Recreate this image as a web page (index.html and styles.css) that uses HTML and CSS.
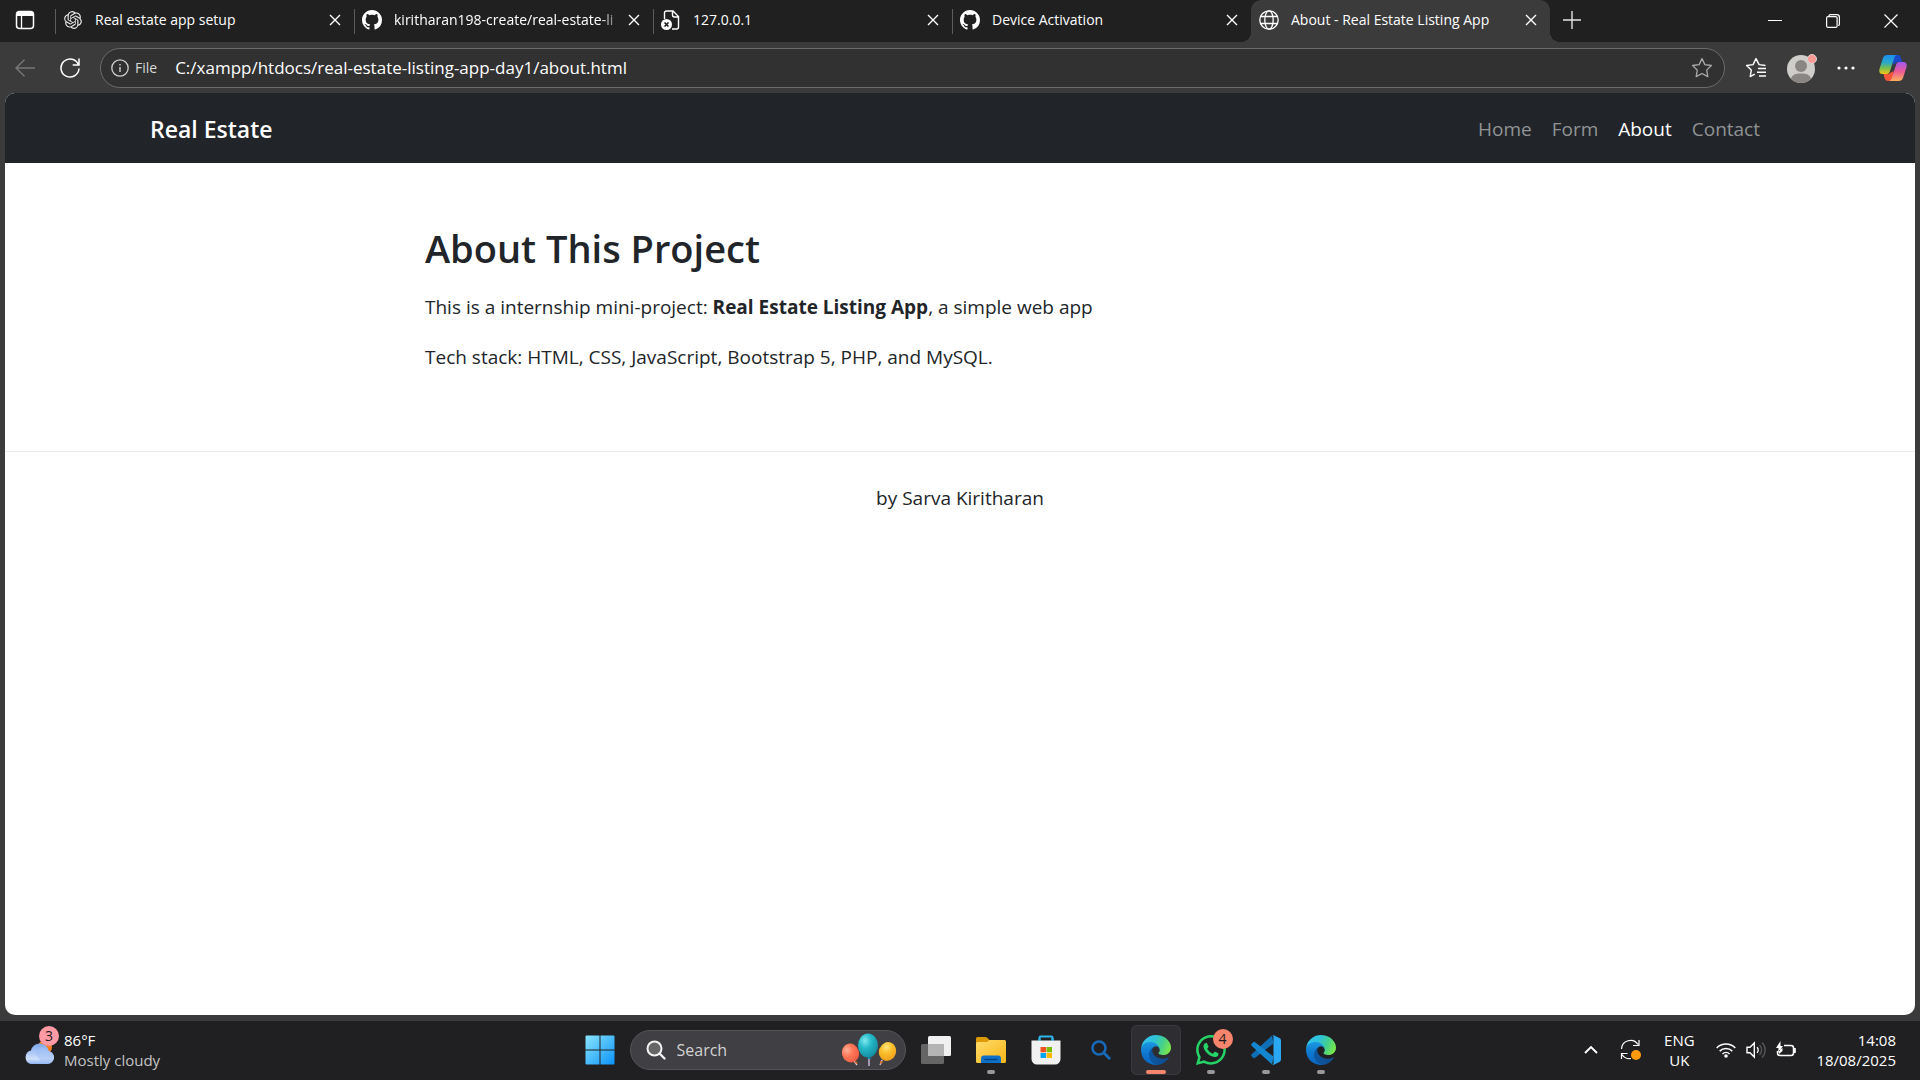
FILE: index.html
```html
<!DOCTYPE html>
<html lang="en">
<head>
<meta charset="utf-8">
<meta name="viewport" content="width=device-width, initial-scale=1">
<title>About - Real Estate Listing App</title>
<link rel="stylesheet" href="styles.css">
</head>
<body>
<svg class="defs" aria-hidden="true">
  <defs>
    <linearGradient id="edgeA" x1="0" y1="0" x2="1" y2="0"><stop offset="0" stop-color="#0c59a4"/><stop offset="1" stop-color="#114a8b"/></linearGradient>
    <linearGradient id="edgeB" x1="0" y1="0" x2="0" y2="1"><stop offset="0" stop-color="#1b9de2"/><stop offset=".5" stop-color="#0f78d0"/><stop offset="1" stop-color="#0a64c0"/></linearGradient>
    <linearGradient id="edgeC" x1="0" y1=".3" x2="1" y2=".6"><stop offset="0" stop-color="#35c1f1"/><stop offset=".4" stop-color="#2fc3d6"/><stop offset=".7" stop-color="#45d08a"/><stop offset="1" stop-color="#7be84a"/></linearGradient>
    <linearGradient id="win" x1="0" y1="0" x2="1" y2="1"><stop offset="0" stop-color="#8be4ff"/><stop offset="1" stop-color="#0a93f8"/></linearGradient>
    <linearGradient id="cloud" x1="0" y1="0" x2="0" y2="1"><stop offset="0" stop-color="#7ba6ee"/><stop offset=".75" stop-color="#cfe0fb"/><stop offset="1" stop-color="#8fb4f2"/></linearGradient>
    <linearGradient id="folder" x1="0" y1="0" x2="1" y2="1"><stop offset="0" stop-color="#ffdc6b"/><stop offset="1" stop-color="#f7b517"/></linearGradient>
    <linearGradient id="copA" x1="0" y1="0" x2="0" y2="1"><stop offset="0" stop-color="#1b8ff0"/><stop offset=".4" stop-color="#2aa8c8"/><stop offset=".7" stop-color="#7cc04a"/><stop offset="1" stop-color="#f5c518"/></linearGradient>
    <linearGradient id="copB" x1="0" y1="0" x2="0" y2="1"><stop offset="0" stop-color="#a257f0"/><stop offset=".5" stop-color="#ee5a96"/><stop offset="1" stop-color="#fbb05a"/></linearGradient>
    <radialGradient id="balR" cx=".35" cy=".3" r=".8"><stop offset="0" stop-color="#ffb09a"/><stop offset=".4" stop-color="#ff7a5c"/><stop offset="1" stop-color="#f0563c"/></radialGradient>
    <radialGradient id="balT" cx=".35" cy=".3" r=".8"><stop offset="0" stop-color="#7eeaf0"/><stop offset=".4" stop-color="#25b9c8"/><stop offset="1" stop-color="#11869a"/></radialGradient>
    <radialGradient id="balY" cx=".35" cy=".3" r=".8"><stop offset="0" stop-color="#ffe680"/><stop offset=".4" stop-color="#fbc02d"/><stop offset="1" stop-color="#ee9a1a"/></radialGradient>
    <symbol id="i-close" viewBox="0 0 12 12"><path d="M1 1l10 10M11 1L1 11" fill="none" stroke="currentColor" stroke-width="1.4"/></symbol>
    <symbol id="i-github" viewBox="0 0 16 16"><path fill="currentColor" d="M8 0C3.58 0 0 3.58 0 8c0 3.54 2.29 6.53 5.47 7.59.4.07.55-.17.55-.38 0-.19-.01-.82-.01-1.49-2.01.37-2.53-.49-2.69-.94-.09-.23-.48-.94-.82-1.13-.28-.15-.68-.52-.01-.53.63-.01 1.08.58 1.23.82.72 1.21 1.87.87 2.33.66.07-.52.28-.87.51-1.07-1.78-.2-3.64-.89-3.64-3.95 0-.87.31-1.59.82-2.15-.08-.2-.36-1.02.08-2.12 0 0 .67-.21 2.2.82.64-.18 1.32-.27 2-.27s1.36.09 2 .27c1.53-1.04 2.2-.82 2.2-.82.44 1.1.16 1.92.08 2.12.51.56.82 1.27.82 2.15 0 3.07-1.87 3.75-3.65 3.95.29.25.54.73.54 1.48 0 1.07-.01 1.93-.01 2.2 0 .21.15.46.55.38A8.01 8.01 0 0 0 16 8c0-4.42-3.58-8-8-8z"/></symbol>
    <symbol id="i-edge" viewBox="0 0 256 256">
      <path fill="url(#edgeA)" d="M231 190.5c-3.4 1.8-6.9 3.4-10.5 4.7a101.5 101.5 0 01-35.9 6.5c-47.3 0-88.5-32.5-88.5-74.3a31.5 31.5 0 0116.4-27.3c-42.8 1.8-53.8 46.4-53.8 72.5 0 73.9 68.1 81.4 82.8 81.4 7.9 0 19.8-2.3 27-4.6l1.3-.4a128.3 128.3 0 0066.6-52.8 4 4 0 00-5.4-5.7z"/>
      <path fill="url(#edgeB)" d="M105.7 241.4A79.2 79.2 0 0183 220.1a80.7 80.7 0 0129.5-120c3.2-1.5 8.5-4.1 15.6-4a32.4 32.4 0 0125.7 13 31.9 31.9 0 016.3 18.7c0-.2 24.5-79.6-80-79.6-43.9 0-80 41.7-80 78.2a130.2 130.2 0 0012.1 56 128 128 0 00156.4 67 75.5 75.5 0 01-62.8-8z"/>
      <path fill="url(#edgeC)" d="M152.3 148.9c-.9 1-3.4 2.5-3.4 5.6 0 2.6 1.7 5.1 4.8 7.2 14.3 10 41.4 8.6 41.5 8.6a59.6 59.6 0 0030.3-8.3 61.4 61.4 0 0030.4-52.9c.3-22.4-8-37.3-11.3-43.9C223.5 23.9 177.7 0 128 0A128 128 0 000 126.2c.5-36.5 36.8-66 80-66 3.5 0 23.5.3 42 10.1a72.6 72.6 0 0130.9 29.3c6.1 10.6 7.2 24.1 7.2 29.5s-2.7 13.3-7.8 19.9z"/>
    </symbol>
  </defs>
</svg>

<div class="browser">
  <div class="tab-strip">
    <button class="tab-actions" aria-label="Tab actions menu"><svg width="20" height="20" viewBox="0 0 20 20"><rect x="1.500" y="1.500" width="17" height="17" rx="3" fill="none" stroke="#fff" stroke-width="1.500"/><path d="M2 4a3 3 0 0 1 3-3h10a3 3 0 0 1 3 3v2H2z" fill="#fff"/><path d="M6.500 6v12" stroke="#fff" stroke-width="1.300"/></svg></button>
    <div class="tabs">
      <div class="tab">
        <svg class="favicon" viewBox="-1.500 -1.500 27 27"><path fill="#e8e8e8" d="M22.2819 9.8211a5.9847 5.9847 0 0 0-.5157-4.9108 6.0462 6.0462 0 0 0-6.5098-2.9A6.0651 6.0651 0 0 0 4.9807 4.1818a5.9847 5.9847 0 0 0-3.9977 2.9 6.0462 6.0462 0 0 0 .7427 7.0966 5.98 5.98 0 0 0 .511 4.9107 6.051 6.051 0 0 0 6.5146 2.9001A5.9847 5.9847 0 0 0 13.2599 24a6.0557 6.0557 0 0 0 5.7718-4.2058 5.9894 5.9894 0 0 0 3.9977-2.9001 6.0557 6.0557 0 0 0-.7475-7.0729zm-9.022 12.6081a4.4755 4.4755 0 0 1-2.8764-1.0408l.1419-.0804 4.7783-2.7582a.7948.7948 0 0 0 .3927-.6813v-6.7369l2.02 1.1686a.071.071 0 0 1 .038.052v5.5826a4.504 4.504 0 0 1-4.4945 4.4944zm-9.6607-4.1254a4.4708 4.4708 0 0 1-.5346-3.0137l.142.0852 4.783 2.7582a.7712.7712 0 0 0 .7806 0l5.8428-3.3685v2.3324a.0804.0804 0 0 1-.0332.0615L9.74 19.9502a4.4992 4.4992 0 0 1-6.1408-1.6464zM2.3408 7.8956a4.485 4.485 0 0 1 2.3655-1.9728V11.6a.7664.7664 0 0 0 .3879.6765l5.8144 3.3543-2.0201 1.1685a.0757.0757 0 0 1-.071 0l-4.8303-2.7865A4.504 4.504 0 0 1 2.3408 7.872zm16.5963 3.8558L13.1038 8.364 15.1192 7.2a.0757.0757 0 0 1 .071 0l4.8303 2.7913a4.4944 4.4944 0 0 1-.6765 8.1042v-5.6772a.79.79 0 0 0-.407-.667zm2.0107-3.0231l-.142-.0852-4.7735-2.7818a.7759.7759 0 0 0-.7854 0L9.409 9.2297V6.8974a.0662.0662 0 0 1 .0284-.0615l4.8303-2.7866a4.4992 4.4992 0 0 1 6.6802 4.66zM8.3065 12.863l-2.02-1.1638a.0804.0804 0 0 1-.038-.0567V6.0742a4.4992 4.4992 0 0 1 7.3757-3.4537l-.142.0805L8.704 5.459a.7948.7948 0 0 0-.3927.6813zm1.0976-2.3654l2.602-1.4998 2.6069 1.4998v2.9994l-2.5974 1.4997-2.6067-1.4997Z"/></svg>
        <span class="tab-title">Real estate app setup</span>
        <button class="tab-close" aria-label="Close tab"><svg width="12" height="12"><use href="#i-close"/></svg></button>
      </div>
      <div class="tab">
        <svg class="favicon"><use href="#i-github"/></svg>
        <span class="tab-title tab-title-fade">kiritharan198-create/real-estate-li</span>
        <button class="tab-close" aria-label="Close tab"><svg width="12" height="12"><use href="#i-close"/></svg></button>
      </div>
      <div class="tab">
        <svg class="favicon" viewBox="0 0 20 20"><path d="M3.500 9V3a2 2 0 0 1 2-2H12l5.500 5.500V17a2 2 0 0 1-2 2H11M11.500 1v4a2 2 0 0 0 2 2h4" fill="none" stroke="#fff" stroke-width="1.400"/><circle cx="5.500" cy="14.500" r="5.500" fill="#fff"/><path d="M3.500 12.500l4 4m0-4l-4 4" stroke="#202020" stroke-width="1.600"/></svg>
        <span class="tab-title">127.0.0.1</span>
        <button class="tab-close" aria-label="Close tab"><svg width="12" height="12"><use href="#i-close"/></svg></button>
      </div>
      <div class="tab">
        <svg class="favicon"><use href="#i-github"/></svg>
        <span class="tab-title">Device Activation</span>
        <button class="tab-close" aria-label="Close tab"><svg width="12" height="12"><use href="#i-close"/></svg></button>
      </div>
      <div class="tab tab-active">
        <svg class="favicon" viewBox="0 0 20 20"><g fill="none" stroke="#fff" stroke-width="1.300"><circle cx="10" cy="10" r="9.200"/><ellipse cx="10" cy="10" rx="4.200" ry="9.200"/><path d="M1.600 6.500h16.800M1.600 13.500h16.800"/></g></svg>
        <span class="tab-title">About - Real Estate Listing App</span>
        <button class="tab-close" aria-label="Close tab"><svg width="12" height="12"><use href="#i-close"/></svg></button>
      </div>
    </div>
    <button class="new-tab" aria-label="New tab"><svg width="18" height="18" viewBox="0 0 18 18"><path d="M9 0v18M0 9h18" stroke="#e4e4e4" stroke-width="1.400"/></svg></button>
    <div class="window-controls">
      <button aria-label="Minimise"><svg width="14" height="14" viewBox="0 0 14 14"><path d="M0 6.500h14" stroke="#fff"/></svg></button>
      <button aria-label="Restore"><svg width="14" height="14" viewBox="0 0 14 14"><g fill="none" stroke="#fff" stroke-width="1.200"><rect x=".6" y="2.600" width="10.500" height="10.800" rx="1.500"/><path d="M3 2.500V2A1.400 1.400 0 0 1 4.400.6h6.400a2.600 2.600 0 0 1 2.600 2.600v7a1.300 1.300 0 0 1-1.300 1.300"/></g></svg></button>
      <button aria-label="Close window"><svg width="14" height="14" viewBox="0 0 14 14"><path d="M.5.5l13 13m0-13l-13 13" stroke="#fff" stroke-width="1.200"/></svg></button>
    </div>
  </div>

  <div class="toolbar">
    <button class="tool" aria-label="Back" disabled><svg width="20" height="18" viewBox="0 0 20 18"><path d="M20 9H1M9.500 .7L1 9l8.500 8.300" fill="none" stroke="#777" stroke-width="1.400"/></svg></button>
    <button class="tool" aria-label="Refresh"><svg width="22" height="22" viewBox="0 0 22 22"><path d="M19.500 8A9 9 0 1 0 20 11.500M20 1.500V8h-6.300" fill="none" stroke="#fff" stroke-width="1.500"/></svg></button>
    <div class="address">
      <button class="site-info"><svg width="18" height="18" viewBox="0 0 18 18"><circle cx="9" cy="9" r="8.200" fill="none" stroke="#d0d0d0" stroke-width="1.300"/><path d="M9 8v5M9 5v1.500" stroke="#d0d0d0" stroke-width="1.400"/></svg>File</button>
      <input class="url" type="text" aria-label="Address" value="C:/xampp/htdocs/real-estate-listing-app-day1/about.html">
      <button class="favourite" aria-label="Add to favourites"><svg width="22" height="22" viewBox="0 0 22 22"><path d="M11 1.600l2.900 6 6.500.9-4.700 4.600 1.100 6.500L11 16.500l-5.800 3.100 1.100-6.500L1.600 8.500l6.500-.9z" fill="none" stroke="#aaa" stroke-width="1.300" stroke-linejoin="round"/></svg></button>
    </div>
    <div class="tools-right">
      <button class="tool" aria-label="Favourites"><svg width="22" height="22" viewBox="0 0 22 22"><path d="M20.500 8.500l-6.400-.9L11 1.600l-2.900 6-6.500.9 4.700 4.600-1.100 6.500 4.500-2.400M13 11.500h8M12 15.300h9M14 19h7" fill="none" stroke="#fff" stroke-width="1.400" stroke-linejoin="round"/></svg></button>
      <button class="tool" aria-label="Profile"><svg width="32" height="32" viewBox="0 0 32 32"><circle cx="16" cy="17" r="14" fill="#cfcdca"/><circle cx="16" cy="14" r="6" fill="#8a8683"/><path d="M6 26.800C7 22.500 11 21.500 16 21.500s9 1 10 5.300A14 14 0 0 1 6 26.800z" fill="#8a8683"/><circle cx="27" cy="7" r="4.500" fill="#ff9a94" stroke="#d6d3d0"/></svg></button>
      <button class="tool" aria-label="Settings and more"><svg width="18" height="4" viewBox="0 0 18 4" fill="#fff"><circle cx="2" cy="2" r="1.600"/><circle cx="9" cy="2" r="1.600"/><circle cx="16" cy="2" r="1.600"/></svg></button>
      <button class="tool tool-copilot" aria-label="Copilot"><svg width="28" height="28" viewBox="0 0 28 28"><path d="M14 1h5c2 0 2.500 1.500 3 3l1 4h-5l-4 3z" fill="#1a49c8"/><path d="M14 27H9c-2 0-3-1.500-3.500-3L4.500 20h5l5-3z" fill="#f4553a"/><path d="M8.500 1H18c-1.500 0-2.300 1.500-2.800 3L11 17c-.6 2-1.500 3-3.500 3H3.500C.5 20-.3 17.500.6 14.500L4 4c.8-2 2-3 4.500-3z" fill="url(#copA)"/><path d="M19.500 27H10c1.500 0 2.300-1.500 2.800-3L17 11c.6-2 1.500-3 3.500-3h4c3 0 3.800 2.500 2.900 5.500L24 24c-.8 2-2 3-4.500 3z" fill="url(#copB)"/></svg></button>
    </div>
  </div>

  <div class="page">
    <header class="navbar">
      <div class="container navbar-inner">
        <a class="brand" href="#">Real Estate</a>
        <nav class="nav">
          <a href="#">Home</a>
          <a href="#">Form</a>
          <a class="nav-current" href="#" aria-current="page">About</a>
          <a href="#">Contact</a>
        </nav>
      </div>
    </header>
    <main class="about">
      <h2>About This Project</h2>
      <p>This is a internship mini-project: <strong>Real Estate Listing App</strong>, a simple web app</p>
      <p>Tech stack: HTML, CSS, JavaScript, Bootstrap 5, PHP, and MySQL.</p>
    </main>
    <footer class="footer">by Sarva Kiritharan</footer>
  </div>
</div>

<div class="taskbar">
  <div class="weather">
    <svg width="32" height="32" viewBox="0 0 32 32"><circle cx="22" cy="13" r="7" fill="#f57c1f"/><path d="M7.500 30h17a6.500 6.500 0 0 0 1.200-12.900A9 9 0 0 0 8 16.500 7 7 0 0 0 7.500 30z" fill="url(#cloud)"/><path d="M12 19a8 8 0 0 1 14-1.800A6.500 6.500 0 0 1 24.500 30h-5" fill="#9fc0f6" opacity=".5"/></svg>
    <span class="badge badge-weather">3</span>
    <div class="weather-text"><span>86°F</span><span class="muted">Mostly cloudy</span></div>
  </div>

  <div class="dock">
    <button class="app" aria-label="Start"><svg width="30" height="30" viewBox="0 0 30 30"><path fill="url(#win)" d="M1.500 .5h13v14h-14v-13a1 1 0 0 1 1-1zm14 0h13a1 1 0 0 1 1 1v13h-14zm-15 15h14v14h-13a1 1 0 0 1-1-1zm15 0h14v13a1 1 0 0 1-1 1h-13z"/></svg></button>
    <label class="search">
      <svg width="20" height="20" viewBox="0 0 20 20"><circle cx="8.500" cy="8.500" r="7" fill="#666" stroke="#f2f2f2" stroke-width="2"/><path d="M13.500 13.500l5 5" stroke="#f2f2f2" stroke-width="2.400" stroke-linecap="round"/></svg>
      <input type="text" placeholder="Search" aria-label="Search">
      <svg width="56" height="34" viewBox="0 0 56 34"><path d="M13 28l3 4M28 24v9M41 27l-2 5" stroke="#d8c8f0" stroke-width="1.300"/><path d="M13 29.500l3-1 .6 3zM39 28l3.500.5-3 3z" fill="#d8702a"/><path d="M26 26l2-3 2.500 3z" fill="#1a7fa8"/><ellipse cx="9.500" cy="20" rx="8.500" ry="9.500" fill="url(#balR)" transform="rotate(-15 9.500 20)"/><ellipse cx="27" cy="12.500" rx="10" ry="12" fill="url(#balT)"/><ellipse cx="46.500" cy="18.500" rx="8.500" ry="9.500" fill="url(#balY)" transform="rotate(20 46.500 18.500)"/></svg>
    </label>
    <button class="app" aria-label="Task view"><svg width="32" height="30" viewBox="0 0 32 30"><rect x="1" y="9" width="23" height="20" rx="1.500" fill="#656565"/><rect x="8" y="1" width="23" height="20" rx="1.500" fill="#f0f0f0"/><path d="M8 9h16v12H9.500A1.500 1.500 0 0 1 8 19.500z" fill="#b4b4b4"/></svg></button>
    <button class="app app-running" aria-label="File Explorer"><svg width="30" height="28" viewBox="0 0 30 28"><path d="M0 2.500A1.500 1.500 0 0 1 1.500 1h7.700c1 0 1.700.4 2.300 1L13.500 4H28v8H0z" fill="#dd9a08"/><path d="M0 7.500A1.500 1.500 0 0 1 1.500 6h9.300c1 0 1.700-2 3-2h14.700A1.500 1.500 0 0 1 30 5.500v20a1.500 1.500 0 0 1-1.500 1.500h-27A1.500 1.500 0 0 1 0 25.500z" fill="url(#folder)"/><path d="M5 27v-4.500a3 3 0 0 1 3-3h14a3 3 0 0 1 3 3V27z" fill="#0f70c8"/><path d="M8.500 23.500h13" stroke="#0a3f80" stroke-width="1.300"/></svg></button>
    <button class="app" aria-label="Store"><svg width="30" height="30" viewBox="0 0 30 30"><path d="M8.500 8V2.500a1 1 0 0 1 1-1h11a1 1 0 0 1 1 1V8" fill="none" stroke="#2cb6ea" stroke-width="2"/><path d="M.5 5.500h29V24a5.500 5.500 0 0 1-5.500 5.500H6A5.500 5.500 0 0 1 .5 24z" fill="#f1f1f1"/><path d="M8.500 5.500V3M21.500 5.500V3" stroke="#2cb6ea" stroke-width="2"/><path d="M9.500 12H15v5.300H9.500z" fill="#f25022"/><path d="M15.500 12H21v5.300h-5.500z" fill="#7fba00"/><path d="M9.500 18H15v5H9.500z" fill="#00a4ef"/><path d="M15.500 18H21v5h-5.500z" fill="#ffb900"/></svg></button>
    <button class="app" aria-label="Windows Search"><svg width="20" height="20" viewBox="0 0 20 20"><circle cx="8" cy="8" r="6.500" fill="none" stroke="#1769b8" stroke-width="2.600"/><path d="M12.800 12.800l5.400 5.400" stroke="#1769b8" stroke-width="3" stroke-linecap="round"/></svg></button>
    <button class="app app-running app-active" aria-label="Microsoft Edge"><svg width="30" height="30"><use href="#i-edge"/></svg></button>
    <button class="app app-running" aria-label="WhatsApp"><svg width="30" height="30" viewBox="0 0 16 16"><path fill="#25d366" d="M13.601 2.326A7.850 7.850 0 0 0 7.994 0C3.627 0 .068 3.558.064 7.926c0 1.399.366 2.760 1.057 3.965L0 16l4.204-1.102a7.900 7.900 0 0 0 3.790.965h.004c4.368 0 7.926-3.558 7.930-7.930A7.900 7.900 0 0 0 13.600 2.326zM7.994 14.521a6.600 6.600 0 0 1-3.356-.920l-.240-.144-2.494.654.666-2.433-.156-.251a6.560 6.560 0 0 1-1.007-3.505c0-3.626 2.957-6.584 6.591-6.584a6.560 6.560 0 0 1 4.660 1.931 6.560 6.560 0 0 1 1.928 4.660c-.004 3.639-2.961 6.592-6.592 6.592m3.615-4.934c-.197-.099-1.170-.578-1.353-.646-.182-.065-.315-.099-.445.099-.133.197-.513.646-.627.775-.114.133-.232.148-.430.050-.197-.100-.836-.308-1.592-.985-.590-.525-.985-1.175-1.103-1.372-.114-.198-.011-.304.088-.403.087-.088.197-.232.296-.346.100-.114.133-.198.198-.330.065-.134.034-.248-.015-.347-.050-.099-.445-1.076-.612-1.470-.160-.389-.323-.335-.445-.340-.114-.007-.247-.007-.380-.007a.730.730 0 0 0-.529.247c-.182.198-.691.677-.691 1.654s.710 1.916.810 2.049c.098.133 1.394 2.132 3.383 2.992.470.205.840.326 1.129.418.475.152.904.129 1.246.080.380-.058 1.171-.480 1.338-.943.164-.464.164-.860.114-.943-.049-.084-.182-.133-.380-.232"/></svg><span class="badge badge-app">4</span></button>
    <button class="app app-running" aria-label="Visual Studio Code"><svg width="30" height="30" viewBox="0 0 100 100"><path d="M70 2L75 28 14 76q-4 3-7 0L2 71q-3-4 0-7z" fill="#0f6fb5"/><path d="M70 98L75 72 14 24q-4-3-7 0L2 29q-3 4 0 7z" fill="#1486cf"/><path d="M69 99q4 2 7 0l20-10q4-2 4-7V18q0-5-4-7L76 1q-4-2-7 1 6-3 6 4v88q0 7-6 5z" fill="#2aa7f3"/></svg></button>
    <button class="app app-running" aria-label="Microsoft Edge, second profile"><svg width="30" height="30"><use href="#i-edge"/></svg></button>
  </div>

  <div class="tray">
    <button class="tray-item" aria-label="Show hidden icons"><svg width="14" height="9" viewBox="0 0 14 9"><path d="M1 8l6-6 6 6" fill="none" stroke="#fff" stroke-width="1.900"/></svg></button>
    <button class="tray-item" aria-label="Updates available"><svg width="22" height="22" viewBox="0 0 22 22"><path d="M1.500 10A9 9 0 0 1 18 5.500M19 1v5.500h-6M1.500 20v-5.500h6M2 15.500a9 9 0 0 0 9 4" fill="none" stroke="#fff" stroke-width="1.200"/><circle cx="16" cy="16" r="5" fill="#ff9a0c"/></svg></button>
    <button class="language"><span>ENG</span><span>UK</span></button>
    <button class="status" aria-label="Network, volume and battery">
      <svg width="20" height="16" viewBox="0 0 20 16"><g fill="none" stroke="#fff" stroke-width="1.500"><path d="M.7 6a13 13 0 0 1 18.600 0M3.700 9.100a9 9 0 0 1 12.600 0M6.500 12a5 5 0 0 1 7 0"/></g><circle cx="10" cy="14" r="1.800" fill="#fff"/></svg>
      <svg width="20" height="18" viewBox="0 0 20 18"><g fill="none" stroke="#fff" stroke-width="1.400"><path d="M1 6.200h3L8.300 2v14L4 11.800H1zM11 6.200a4 4 0 0 1 0 5.600"/><path d="M13.500 4a7 7 0 0 1 0 10M16 1.500a10.500 10.500 0 0 1 0 15" stroke="#555"/></g></svg>
      <svg width="20" height="18" viewBox="0 0 20 18"><path d="M8 4.500h7a2.500 2.500 0 0 1 2.500 2.500v5a2.500 2.500 0 0 1-2.500 2.500H4A2.500 2.500 0 0 1 1.500 12v-2" fill="none" stroke="#fff" stroke-width="1.500"/><path d="M18.800 7v5" stroke="#fff" stroke-width="2"/><path d="M4.500 0L0 7h2.500L2 12l5-7H4.500zM3 13V9.500l3.500-2.500V10z" fill="#fff"/></svg>
    </button>
    <button class="clock"><span>14:08</span><span>18/08/2025</span></button>
  </div>
</div>
</body>
</html>
```
FILE: styles.css
```css
* {
  box-sizing: border-box;
}

body {
  display: flex;
  flex-direction: column;
  min-height: 100vh;
  margin: 0;
  background: #202022;
  color: #fff;
  font-family: "Open Sans", "Noto Sans", sans-serif;
  font-size: 14px;
}

button,
input {
  padding: 0;
  border: 0;
  background: none;
  color: inherit;
  font: inherit;
}

button {
  display: flex;
  flex: none;
  align-items: center;
  justify-content: center;
}

input {
  min-width: 0;
  outline: 0;
}

a {
  color: inherit;
  text-decoration: none;
}

svg {
  display: block;
  flex: none;
}

.defs {
  position: absolute;
  width: 0;
  height: 0;
}

/* Browser window */

.browser {
  display: flex;
  flex: 1;
  flex-direction: column;
  background: #3b3b3b;
}

.tab-strip {
  display: flex;
  height: 42px;
  background: #202020;
}

.tab-actions {
  width: 50px;
  height: 40px;
}

.tabs {
  display: flex;
  flex: 0 1 1500px;
  min-width: 0;
  padding-left: 5px;
}

.tab {
  position: relative;
  display: flex;
  flex: 1 1 0;
  align-items: center;
  gap: 12px;
  min-width: 0;
  padding: 0 13px 2px 8px;
}

.tab::before {
  content: "";
  position: absolute;
  top: 9px;
  left: 0;
  width: 1px;
  height: 25px;
  background: #5c5c5c;
}

.tab-active {
  z-index: 1;
  border-radius: 10px 10px 0 0;
  background: #3b3b3b;
}

.tab-active::before,
.tab-active::after {
  content: "";
  position: absolute;
  top: auto;
  bottom: 0;
  width: 10px;
  height: 10px;
}

.tab-active::before {
  left: -10px;
  background: radial-gradient(circle at 0 0, #202020 10px, #3b3b3b 10px);
}

.tab-active::after {
  right: -10px;
  background: radial-gradient(circle at 100% 0, #202020 10px, #3b3b3b 10px);
}

.favicon {
  width: 20px;
  height: 20px;
}

.tab-title {
  flex: 1;
  padding-bottom: 2px;
  overflow: hidden;
  white-space: nowrap;
}

.tab-title-fade {
  -webkit-mask-image: linear-gradient(to left, transparent, #000 24px);
  mask-image: linear-gradient(to left, transparent, #000 24px);
  margin-right: -8px;
}

.new-tab {
  width: 44px;
  height: 40px;
}

.window-controls {
  display: flex;
  margin-left: auto;
}

.window-controls button {
  width: 58px;
}

.toolbar {
  display: flex;
  align-items: center;
  height: 51px;
  padding: 0 2px;
}

.tool {
  width: 45px;
  height: 40px;
}

.address {
  display: flex;
  flex: 1;
  align-items: center;
  height: 40px;
  margin-left: 8px;
  padding: 0 11px 0 10px;
  border: 1px solid #6b6b6b;
  border-radius: 20px;
  background: #313131;
}

.site-info {
  gap: 6px;
  margin-right: 18px;
  color: #d8d8d8;
}

.url {
  flex: 1;
  font-size: 17px;
}

.tools-right {
  display: flex;
  margin-left: 8px;
}

.tool-copilot {
  width: 50px;
}

/* Web page */

.page {
  flex: 1;
  margin: 0 5px 5px;
  overflow: hidden;
  border-radius: 10px;
  background: #fff;
  color: #212529;
  font-size: 19px;
  line-height: 30px;
}

.navbar {
  background: #212529;
}

.container {
  max-width: 1650px;
  margin: 0 auto;
  padding: 0 15px;
}

.navbar-inner {
  display: flex;
  align-items: center;
  justify-content: space-between;
  min-height: 70px;
  padding-top: 1px;
}

.brand {
  color: #fff;
  font-size: 23px;
  font-weight: 600;
}

.nav {
  display: flex;
  color: #909294;
}

.nav a {
  padding: 10px;
}

.nav .nav-current {
  color: #fff;
}

.about {
  max-width: 1100px;
  margin: 0 auto;
  padding: 61px 15px 59px;
}

.about h2 {
  margin: 0 0 20px;
  font-size: 38px;
  font-weight: 600;
  line-height: 48px;
}

.about p {
  margin: 0 0 20px;
}

.footer {
  padding: 31px 15px 29px;
  border-top: 1px solid #e9ebed;
  text-align: center;
}

/* Taskbar */

.taskbar {
  display: grid;
  grid-template-columns: 1fr auto 1fr;
  align-items: center;
  height: 60px;
  padding-bottom: 2px;
  border-top: 1px solid #3a3a3c;
  font-size: 15px;
}

.weather {
  position: relative;
  display: flex;
  align-items: center;
  gap: 9px;
  padding-left: 23px;
}

.weather-text {
  display: flex;
  flex-direction: column;
  line-height: 20px;
}

.muted {
  color: #c4c4c4;
}

.badge {
  position: absolute;
  display: grid;
  place-items: center;
  width: 20px;
  height: 20px;
  border-radius: 50%;
  color: #1c1c1c;
  font-size: 14px;
}

.badge-weather {
  top: -4px;
  left: 39px;
  background: #ff99a4;
}

.badge-app {
  top: 4px;
  right: 3px;
  background: #f7846c;
}

.dock {
  display: flex;
  align-items: center;
  gap: 5px;
}

.app {
  position: relative;
  width: 50px;
  height: 50px;
  border-radius: 6px;
}

.app-running::after {
  content: "";
  position: absolute;
  bottom: 1px;
  left: 21px;
  width: 8px;
  height: 4px;
  border-radius: 2px;
  background: #98979b;
}

.app-active {
  background: #2e2d32;
  box-shadow: inset 0 0 0 1px #39383d;
}

.app-active::after {
  left: 15px;
  width: 20px;
  background: #f7846c;
}

.search {
  display: flex;
  align-items: center;
  gap: 11px;
  width: 276px;
  height: 40px;
  padding: 0 8px 0 15px;
  border: 1px solid #545357;
  border-radius: 20px;
  background: #403f43;
}

.search input {
  flex: 1;
  font-size: 16px;
}

.search input::placeholder {
  color: #d2d2d2;
  opacity: 1;
}

.tray {
  display: flex;
  align-items: center;
  justify-content: flex-end;
  padding-right: 24px;
  line-height: 20px;
}

.tray-item {
  width: 40px;
  height: 40px;
}

.language,
.clock {
  flex-direction: column;
}

.language {
  width: 56px;
}

.status {
  gap: 10px;
  margin: 0 20px 0 9px;
}

.clock {
  align-items: flex-end;
}
```
